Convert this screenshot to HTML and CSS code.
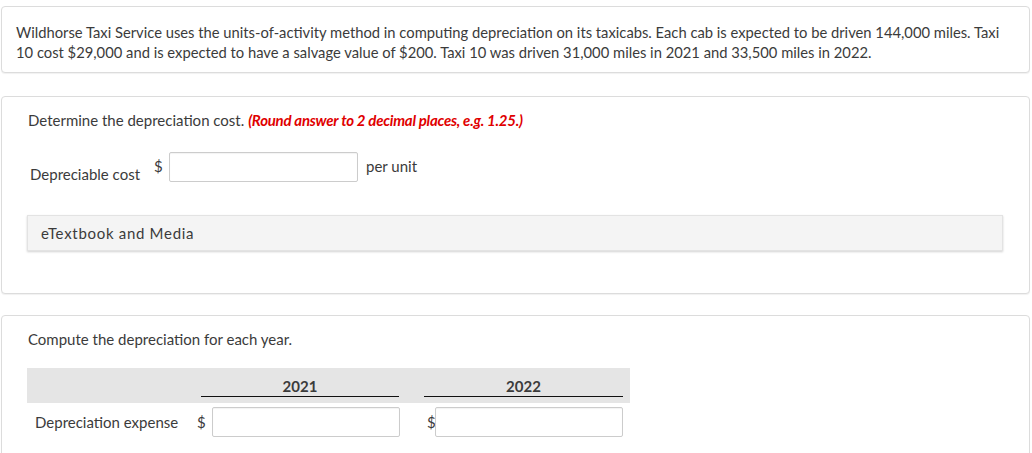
FILE: index.html
```html
<!DOCTYPE html>
<html lang="en">
<head>
<meta charset="utf-8">
<title>Depreciation</title>
<link rel="stylesheet" href="styles.css">
</head>
<body>
<div class="page">
  <div class="card card-question">
    <p class="question">Wildhorse Taxi Service uses the units-of-activity method in computing depreciation on its taxicabs. Each cab is expected to be driven 144,000 miles. Taxi 10 cost $29,000 and is expected to have a salvage value of $200. Taxi 10 was driven 31,000 miles in 2021 and 33,500 miles in 2022.</p>
  </div>

  <div class="card card-part part-a">
    <p class="prompt">Determine the depreciation cost. <em class="hint">(Round answer to 2 decimal places, e.g. 1.25.)</em></p>
    <div class="cost-row">
      <span class="cost-label">Depreciable cost</span>
      <span class="cost-dollar">$</span>
      <input class="answer cost-input" type="text">
      <span class="cost-unit">per unit</span>
    </div>
    <div class="media">eTextbook and Media</div>
  </div>

  <div class="card card-part part-b">
    <p class="prompt">Compute the depreciation for each year.</p>
    <div class="year-table">
      <div class="year-head">
        <span class="head-spacer"></span>
        <span class="year year-1">2021</span>
        <span class="head-gap"></span>
        <span class="year year-2">2022</span>
      </div>
      <div class="year-row">
        <span class="row-label">Depreciation expense</span>
        <span class="row-dollar d1">$</span>
        <input class="answer year-input" type="text">
        <span class="row-dollar d2">$</span>
        <input class="answer year-input" type="text">
      </div>
    </div>
  </div>
</div>
</body>
</html>
```

FILE: styles.css
```css
* { box-sizing: border-box; }

html, body {
  margin: 0;
  padding: 0;
  background: #ffffff;
}

body {
  font-family: Lato, "Open Sans", "Liberation Sans", sans-serif;
  font-size: 15px;
  line-height: 20px;
  color: #3b3b3b;
}

.page {
  padding: 6px 2px 0 1px;
}

.card {
  border: 1px solid #dcdcdc;
  border-radius: 4px;
  background: #fff;
  box-shadow: 0 1px 1px rgba(0, 0, 0, 0.06);
}

.card-question {
  padding: 15px 12px 10px 14px;
}

.question {
  margin: 0;
  font-size: 14.75px;
}

.card-part {
  margin-top: 23px;
  padding: 13px 26px 42px 26px;
}

.part-b {
  margin-top: 21px;
  padding-bottom: 40px;
}

.prompt {
  margin: 0;
}

.hint {
  color: #e00000;
  font-weight: 700;
  font-style: italic;
  letter-spacing: -0.25px;
}

.cost-row {
  display: flex;
  align-items: flex-start;
  margin-top: 22px;
}

.cost-label {
  width: 124px;
  padding-left: 2px;
  margin-top: 12px;
}

.cost-dollar {
  width: 17px;
  padding-left: 2px;
  margin-top: 4px;
}

.answer {
  height: 30px;
  border: 1px solid #cccccc;
  border-radius: 2px;
  background: #fff;
  box-shadow: inset 0 1px 1px rgba(0, 0, 0, 0.05);
  font: inherit;
  padding: 0 6px;
  margin: 0;
}

.cost-input {
  width: 189px;
}

.cost-unit {
  margin-left: 8px;
  margin-top: 4px;
}

.media {
  margin-top: 31px;
  margin-left: -1px;
  background: #f4f4f4;
  border: 1px solid #e3e3e3;
  box-shadow: 0 1px 2px rgba(0, 0, 0, 0.18);
  padding: 7px 13px;
  line-height: 20px;
  letter-spacing: 0.7px;
}

.year-table {
  margin-top: 19px;
  margin-left: -1px;
  width: 603px;
}

.year-head {
  display: flex;
  background: #e5e5e5;
  padding: 9px 7px 6px 0;
}

.head-spacer { width: 174px; }
.head-gap { width: 25px; }

.year {
  text-align: center;
  font-weight: 700;
  line-height: 19px;
  border-bottom: 1px solid #111;
  color: #3b3b3b;
}

.year-1 { width: 198px; }
.year-2 { width: 199px; }

.year-row {
  display: flex;
  align-items: center;
  margin-top: 4px;
}

.row-label {
  width: 170px;
  padding-left: 8px;
}

.row-dollar.d1 { width: 15px; }
.row-dollar.d2 { width: 8px; margin-left: 27px; }

.year-input {
  width: 188px;
}
```
